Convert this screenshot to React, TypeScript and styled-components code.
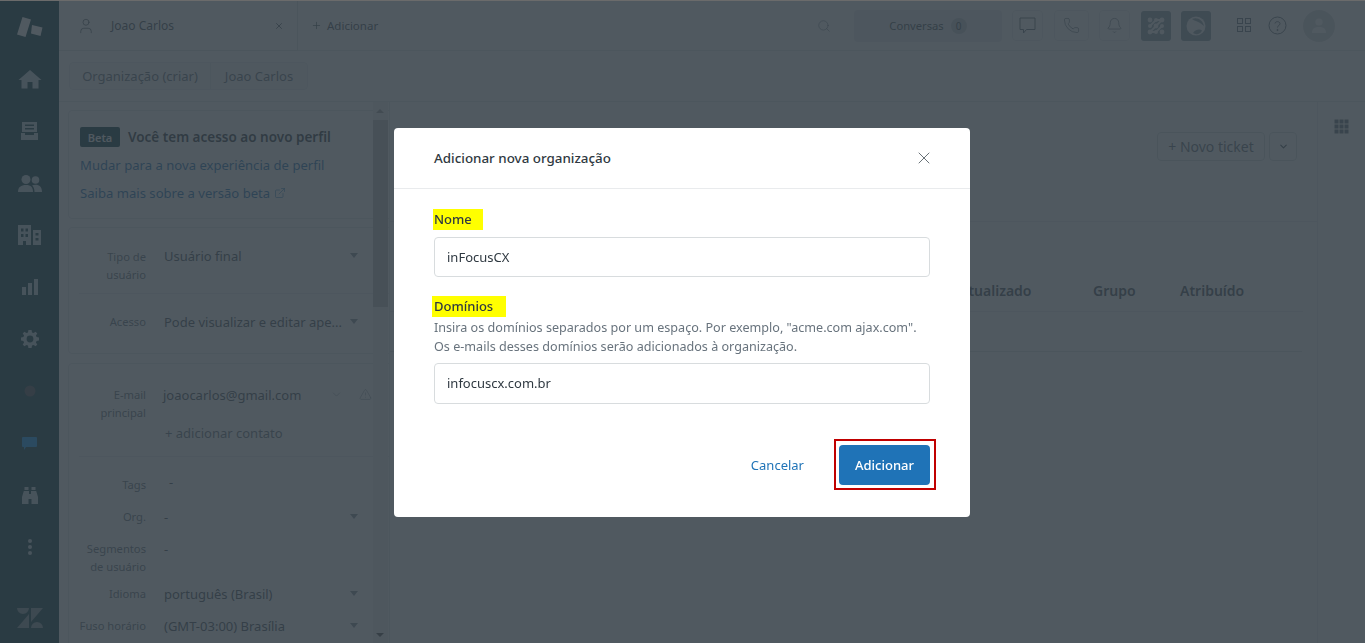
import React from "react";
import styled, { createGlobalStyle } from "styled-components";
import { User, X, Plus, Search, Phone, Bell, ChevronDown, ExternalLink, AlertTriangle } from "lucide-react";

const Global = createGlobalStyle`
  html, body { margin: 0; padding: 0; height: 100%; overflow: hidden; background: #6b6b6b; }
  #root { height: 643px; padding-top: 1px; box-sizing: border-box; }
  * { box-sizing: border-box; }
  body { font-family: "Noto Sans", "Open Sans", "Liberation Sans", sans-serif; color: #2f3941; }
`;

const Page = styled.div`display: flex; height: 642px; background: #fff; overflow: hidden;`;
const Rail = styled.nav`width: 59px; flex: none; background: #03363d; display: flex; flex-direction: column; align-items: center;`;
const RailSlot = styled.div<{ $h?: number; $bright?: boolean }>`height: ${p => p.$h ?? 52}px; flex: none; display: flex; align-items: center; justify-content: center; color: ${p => p.$bright ? "#fff" : "#c3d5dd"};`;
const Workspace = styled.div`flex: 1; min-width: 0; display: flex; flex-direction: column;`;

const TopBar = styled.header`height: 50px; flex: none; display: flex; align-items: stretch; border-bottom: 1px solid #e3e6e9; background: #fff;`;
const Tab = styled.div`width: 239px; display: flex; align-items: center; padding: 0 13px 0 18px; border-right: 1px solid #dfe2e5; border-bottom: 1px solid #dfe2e5; font-size: 12px; color: #49545c; margin-bottom: -1px;`;
const TabName = styled.span`flex: 1; margin-left: 16px;`;
const AddTab = styled.div`display: flex; align-items: center; gap: 5px; padding-left: 13px; font-size: 11.5px; color: #49545c;`;
const TopTools = styled.div`margin-left: auto; display: flex; align-items: center; padding-right: 30px; color: #68737d;`;
const ConvPill = styled.div`width: 148px; height: 32px; margin-left: 23px; border-radius: 4px; background: #e9ebed; display: flex; align-items: center; justify-content: center; gap: 7px; font-size: 11.2px; color: #49545c;`;
const CountDot = styled.span`width: 16px; height: 16px; border-radius: 50%; background: #c2c8cc; font-size: 10px; display: flex; align-items: center; justify-content: center;`;
const ToolBox = styled.div<{ $w: number; $ml: number }>`width: ${p => p.$w}px; height: 31px; margin-left: ${p => p.$ml}px; border: 1px solid #e9ebed; border-radius: 4px; display: flex; align-items: center; justify-content: center; color: #68737d;`;
const AppSquare = styled.div<{ $ml: number; $bg: string }>`width: 30px; height: 30px; margin-left: ${p => p.$ml}px; border-radius: 3px; background: ${p => p.$bg}; display: flex; align-items: center; justify-content: center;`;
const Plain = styled.div<{ $ml: number }>`margin-left: ${p => p.$ml}px; display: flex; align-items: center;`;
const Avatar = styled.div`width: 32px; height: 32px; margin-left: 16px; border-radius: 50%; background: #d8dcde; display: flex; align-items: center; justify-content: center;`;

const CrumbBar = styled.div`height: 51px; flex: none; padding: 11px 0 0 10px; border-bottom: 1px solid #e3e6e9;`;
const Crumbs = styled.div`display: inline-flex; height: 28px; border: 1px solid #e9ebed; border-radius: 4px; background: #f8f9f9;`;
const Crumb = styled.div<{ $w: number; $first?: boolean }>`width: ${p => p.$w}px; padding-bottom: 1px; display: flex; align-items: center; justify-content: center; font-size: 13px; color: #68737d; ${p => p.$first ? "border-right: 1px solid #e3e6e9;" : ""}`;

const Body = styled.div`flex: 1; min-height: 0; display: flex;`;
const LeftPanel = styled.aside`position: relative; width: 331px; flex: none; padding: 8px 0 0 9px; border-right: 1px solid #e3e6e9; overflow: hidden;`;
const Card = styled.section<{ $h: number; $mb: number }>`width: 330px; height: ${p => p.$h}px; margin-bottom: ${p => p.$mb}px; border: 1px solid #e3e6e9; border-radius: 4px;`;
const BetaBody = styled(Card)`padding: 16px 0 0 11px;`;
const BetaTitleRow = styled.div`display: flex; align-items: center; gap: 8px; height: 20px; margin-bottom: 4px;`;
const BetaBadge = styled.span`width: 40px; height: 20px; border-radius: 2px; background: #03363d; color: #fff; font-size: 11px; font-weight: 600; display: flex; align-items: center; justify-content: center;`;
const BetaTitle = styled.strong`font-size: 13.5px; font-weight: 600; white-space: nowrap;`;
const SoftLink = styled.div`display: flex; align-items: center; gap: 4px; height: 28px; font-size: 13.1px; color: #1f73b7;`;
const Row = styled.div<{ $h: number; $pt?: number; $line?: boolean }>`display: flex; height: ${p => p.$h}px; padding-top: ${p => p.$pt || 0}px; ${p => p.$line ? "border-bottom: 1px solid #e9ebed; margin-left: 10px;" : ""}`;
const Label = styled.div<{ $lead?: number }>`width: 77px; flex: none; margin-left: ${p => p.$lead || 0}px; text-align: right; font-size: 11.2px; line-height: 18px; color: #68737d;`;
const Value = styled.div<{ $ml?: number; $mt?: number }>`position: relative; flex: 1; min-width: 0; margin-left: ${p => p.$ml ?? 18}px; margin-top: ${p => p.$mt || 0}px; padding-right: 20px; font-size: 13px; line-height: 18px; color: #49545c; white-space: nowrap;`;
const Caret = styled.span`position: absolute; left: 186px; top: 6px; width: 0; height: 0; border-left: 4.5px solid transparent; border-right: 4.5px solid transparent; border-top: 5px solid #87929d;`;
const AddContact = styled.div`margin: 0 0 0 96px; font-size: 13px; line-height: 18px; color: #68737d;`;
const FieldGlyph = styled.span<{ $left: number }>`position: absolute; left: ${p => p.$left}px; top: 2px; display: flex; color: #7f8a93;`;

const Track = styled.div`position: absolute; top: 0; bottom: 0; right: 1px; width: 15px; background: #f1f1f1;`;
const Thumb = styled.div`position: absolute; left: 0; right: 0; top: 18px; height: 187px; background: #c1c1c1;`;
const Arrow = styled.span<{ $up?: boolean }>`position: absolute; left: 3px; width: 0; height: 0; border-left: 4px solid transparent; border-right: 4px solid transparent; ${p => p.$up ? "top: 7px; border-bottom: 4px solid #a3a3a3;" : "bottom: 6px; border-top: 4px solid #505050;"}`;

const Center = styled.main`flex: 1; min-width: 0; display: flex; flex-direction: column;`;
const Actions = styled.div`height: 120px; flex: none; padding: 30px 20px 0 0; display: flex; justify-content: flex-end; gap: 4px; border-bottom: 1px solid #e9ebed;`;
const GhostBtn = styled.div<{ $w: number }>`width: ${p => p.$w}px; height: 29px; border: 1px solid #d8dcde; border-radius: 4px; display: flex; align-items: center; justify-content: center; font-size: 14px; color: #68737d;`;
const TableHead = styled.div`height: 90px; flex: none; margin-right: 14px; display: flex; align-items: flex-end; padding-bottom: 11px; border-bottom: 1px solid #e9ebed; font-size: 14px; font-weight: 600; color: #49545c;`;
const HeadCell = styled.span<{ $w: number; $ml?: number }>`width: ${p => p.$w}px; margin-left: ${p => p.$ml || 0}px; flex: none;`;
const EmptyRow = styled.div`height: 40px; flex: none; margin-right: 15px; border-bottom: 1px solid #dfe2e5;`;
const RightRail = styled.aside`width: 48px; flex: none; border-left: 1px solid #e9ebed; display: flex; justify-content: center; padding: 17px 0 0 0;`;

const Overlay = styled.div`position: fixed; inset: 1px 0 0 0; padding-right: 1px; background: rgba(49, 60, 68, 0.85); display: flex; align-items: center; justify-content: center;`;
const Modal = styled.div`width: 576px; height: 389px; background: #fff; border-radius: 4px; display: flex; flex-direction: column;`;
const ModalHeader = styled.div`height: 61px; flex: none; display: flex; align-items: center; justify-content: space-between; padding: 0 36px 0 40px; border-bottom: 1px solid #e9ebed; font-size: 13.4px; font-weight: 500; color: #2f3941;`;
const ModalBody = styled.div`padding: 20px 40px 0 40px;`;
const Marked = styled.label<{ $w: number; $ml: number; $mt?: number }>`display: flex; align-items: center; width: ${p => p.$w}px; height: 21px; margin-left: ${p => p.$ml}px; margin-top: ${p => p.$mt || 0}px; padding-left: ${p => -p.$ml}px; background: #ffff00; font-size: 13px; font-weight: 500; color: #2f3941;`;
const Input = styled.div<{ $h: number; $mt?: number }>`height: ${p => p.$h}px; margin-top: ${p => p.$mt || 0}px; border: 1px solid #d8dcde; border-radius: 4px; padding: 0 12px; display: flex; align-items: center; font-size: 13px; color: #2f3941;`;
const Hint = styled.p`margin: 1px 0 7px 0; font-size: 12.6px; line-height: 19px; color: #68737d; white-space: nowrap;`;
const ModalFooter = styled.div`margin-top: 35px; padding-right: 34px; display: flex; align-items: center; justify-content: flex-end;`;
const Cancel = styled.span`margin-right: 30px; padding-top: 1px; font-size: 13px; color: #1f73b7;`;
const RedFrame = styled.div`padding: 4px 4px 3px 3px; border: 2px solid #c00000; display: flex;`;
const Primary = styled.div`width: 91px; height: 40px; border-radius: 4px; background: #1f73b7; color: #fff; font-size: 13px; font-weight: 500; display: flex; align-items: center; justify-content: center;`;

const Logo = () => (
  <svg width="26" height="20" viewBox="0 0 26 20" fill="currentColor"><path d="M5.5 0 L14 2.5 L8.5 20 L0 17.5 Z"/><path d="M15 9 L25.5 11.5 L23.5 20 L14 17.5 Z" transform="translate(0 -1)"/></svg>
);
const Home = () => (
  <svg width="24" height="20" viewBox="0 0 24 20" fill="currentColor"><path d="M12 1 L23.5 11 H20.5 V19.5 H14.5 V13 H9.5 V19.5 H3.5 V11 H0.5 Z"/></svg>
);
const Views = () => (
  <svg width="17" height="18" viewBox="0 0 17 18" fill="currentColor"><path d="M1 0 H16 V10 H1 Z M4 2.5 V4 H13 V2.5 Z M4 6 V7.5 H13 V6 Z" fillRule="evenodd"/><path d="M0 11 H4 V13 H13 V11 H17 V18 H0 Z"/></svg>
);
const Users = () => (
  <svg width="24" height="17" viewBox="0 0 24 17" fill="currentColor"><circle cx="8" cy="4.5" r="4.5"/><circle cx="17.5" cy="5" r="3.8"/><path d="M0 17 C0 12 3 10 8 10 C13 10 15 12.5 15 17 Z"/><path d="M16.5 17 C16.5 13.5 15.5 11.5 14 10.4 C15 10 16 9.8 17.5 9.8 C21.5 9.8 24 12 24 17 Z"/></svg>
);
const Orgs = () => (
  <svg width="23" height="20" viewBox="0 0 23 20" fill="currentColor"><path fillRule="evenodd" d="M0 0 H13 V20 H8 V16 H5 V20 H0 Z M3 3.5 V6.5 H5.5 V3.5 Z M7.5 3.5 V6.5 H10 V3.5 Z M3 9 V12 H5.5 V9 Z M7.5 9 V12 H10 V9 Z"/><path fillRule="evenodd" d="M15 5 H23 V20 H15 Z M17.5 8 V10.5 H20.5 V8 Z M17.5 13 V15.5 H20.5 V13 Z"/></svg>
);
const Bars = () => (
  <svg width="16" height="16" viewBox="0 0 16 16" fill="currentColor"><rect x="0" y="8" width="4" height="8"/><rect x="6" y="4" width="4" height="12"/><rect x="12" y="0" width="4" height="16"/></svg>
);
const Gear = () => (
  <svg width="18" height="18" viewBox="0 0 18 18" fill="currentColor"><path fillRule="evenodd" d="M7.4 0 H10.6 L11 2.4 L12.6 3.1 L14.6 1.7 L16.3 3.4 L14.9 5.4 L15.6 7 L18 7.4 V10.6 L15.6 11 L14.9 12.6 L16.3 14.6 L14.6 16.3 L12.6 14.9 L11 15.6 L10.6 18 H7.4 L7 15.6 L5.4 14.9 L3.4 16.3 L1.7 14.6 L3.1 12.6 L2.4 11 L0 10.6 V7.4 L2.4 7 L3.1 5.4 L1.7 3.4 L3.4 1.7 L5.4 3.1 L7 2.4 Z M9 5.6 A3.4 3.4 0 1 0 9 12.4 A3.4 3.4 0 1 0 9 5.6 Z"/></svg>
);
const ChatBlue = () => (
  <svg width="15" height="13" viewBox="0 0 15 13" fill="#0a99ff"><path d="M1 0 H14 A1 1 0 0 1 15 1 V9 A1 1 0 0 1 14 10 H4 L2 13 V10 H1 A1 1 0 0 1 0 9 V1 A1 1 0 0 1 1 0 Z"/></svg>
);
const Binoculars = () => (
  <svg width="16" height="17" viewBox="0 0 16 17" fill="currentColor"><path d="M2.5 0 H6.5 V3 H2.5 Z M9.5 0 H13.5 V3 H9.5 Z M1.8 4 H7 V7 H9 V4 H14.2 L16 10 V17 H9.5 V12 H6.5 V17 H0 V10 Z"/></svg>
);
const Dots = () => (
  <svg width="4" height="16" viewBox="0 0 4 16" fill="currentColor"><circle cx="2" cy="2" r="2"/><circle cx="2" cy="8" r="2"/><circle cx="2" cy="14" r="2"/></svg>
);
const Zen = () => (
  <svg width="26" height="20" viewBox="0 0 26 20" fill="#7d9297"><path d="M12 6 V20 H0 Z M12 0 A6 6 0 0 1 0 0 Z M14 20 A6 6 0 0 1 26 20 Z M14 14 V0 H26 Z"/></svg>
);
const Squares = ({ size, gap, cols, color, fill }: { size: number; gap: number; cols: number; color: string; fill?: boolean }) => {
  const step = size + gap;
  const total = step * cols - gap;
  const cells: React.ReactNode[] = [];
  for (let r = 0; r < cols; r++) for (let c = 0; c < cols; c++) cells.push(
    <rect key={`${r}${c}`} x={c * step + 0.5} y={r * step + 0.5} width={size - (fill ? 0 : 1)} height={size - (fill ? 0 : 1)} fill={fill ? color : "none"} stroke={fill ? "none" : color} />
  );
  return <svg width={total + 1} height={total + 1} viewBox={`0 0 ${total + 1} ${total + 1}`}>{cells}</svg>;
};
const ChatOutline = () => (
  <svg width="17" height="17" viewBox="0 0 17 17" fill="none" stroke="#68737d"><path d="M1 1 H16 V12.5 H7.5 L4.5 16 V12.5 H1 Z"/></svg>
);
const Wave = () => (
  <svg width="18" height="18" viewBox="0 0 18 18" fill="#f3f5f6"><circle cx="3" cy="3" r="2.4"/><circle cx="9" cy="3" r="2"/><circle cx="15" cy="3" r="2.4"/><circle cx="3" cy="9" r="2"/><circle cx="9" cy="9" r="2.4"/><circle cx="15" cy="9" r="2"/><circle cx="3" cy="15" r="2.4"/><circle cx="9" cy="15" r="2"/><circle cx="15" cy="15" r="2.4"/><path d="M3 9 L9 3 L15 3 L9 9 L3 15 L9 15 L15 9" stroke="#f3f5f6" strokeWidth="2" fill="none"/></svg>
);
const Globe = () => (
  <svg width="20" height="20" viewBox="0 0 20 20"><circle cx="10" cy="10" r="9.5" fill="#f3f5f6"/><path d="M6 3 C11 0.5 17 4 18 10 C14 6 9 5 6 3 Z" fill="#8b9fa8"/><path d="M7 17 C10 13 14 13 16 14.5 C14 18.5 10 19 7 17 Z" fill="#8b9fa8"/></svg>
);
const Person = () => (
  <svg width="14" height="15" viewBox="0 0 14 15" fill="#fff"><circle cx="7" cy="4" r="3.6"/><path d="M0 15 C0 10.5 3 9 7 9 C11 9 14 10.5 14 15 Z"/></svg>
);
const Help = () => (
  <svg width="19" height="19" viewBox="0 0 19 19" fill="none" stroke="#68737d"><circle cx="9.5" cy="9.5" r="8.5"/><path d="M7 7.5 C7 5 12 5 12 7.7 C12 9.5 9.5 9.5 9.5 11.5"/><circle cx="9.5" cy="14" r=".6" fill="#68737d"/></svg>
);

export default function App() {
  return (
    <>
      <Global />
      <Page>
        <Rail>
          <RailSlot $bright><Logo /></RailSlot>
          <RailSlot><Home /></RailSlot>
          <RailSlot><Views /></RailSlot>
          <RailSlot><Users /></RailSlot>
          <RailSlot><Orgs /></RailSlot>
          <RailSlot><Bars /></RailSlot>
          <RailSlot><Gear /></RailSlot>
          <RailSlot><svg width="12" height="12"><circle cx="6" cy="6" r="5.5" fill="#4a4a50" /></svg></RailSlot>
          <RailSlot><ChatBlue /></RailSlot>
          <RailSlot><Binoculars /></RailSlot>
          <RailSlot><Dots /></RailSlot>
          <RailSlot $h={90}><Zen /></RailSlot>
        </Rail>
        <Workspace>
          <TopBar>
            <Tab>
              <User size={18} strokeWidth={1} />
              <TabName>Joao Carlos</TabName>
              <X size={10} strokeWidth={2} />
            </Tab>
            <AddTab><Plus size={11} strokeWidth={1.5} />Adicionar</AddTab>
            <TopTools>
              <Search size={14} strokeWidth={1} />
              <ConvPill>Conversas<CountDot>0</CountDot></ConvPill>
              <ToolBox $w={31} $ml={10}><ChatOutline /></ToolBox>
              <ToolBox $w={35} $ml={11}><Phone size={17} strokeWidth={1} /></ToolBox>
              <ToolBox $w={31} $ml={10}><Bell size={17} strokeWidth={1} /></ToolBox>
              <AppSquare $ml={11} $bg="#8b9fa8"><Wave /></AppSquare>
              <AppSquare $ml={10} $bg="#8b9fa8"><Globe /></AppSquare>
              <Plain $ml={26}><Squares size={6} gap={2} cols={2} color="#68737d" /></Plain>
              <Plain $ml={16}><Help /></Plain>
              <Avatar><Person /></Avatar>
            </TopTools>
          </TopBar>
          <CrumbBar>
            <Crumbs>
              <Crumb $w={141} $first>Organização (criar)</Crumb>
              <Crumb $w={96}>Joao Carlos</Crumb>
            </Crumbs>
          </CrumbBar>
          <Body>
            <LeftPanel>
              <BetaBody $h={109} $mb={8}>
                <BetaTitleRow><BetaBadge>Beta</BetaBadge><BetaTitle>Você tem acesso ao novo perfil</BetaTitle></BetaTitleRow>
                <SoftLink>Mudar para a nova experiência de perfil</SoftLink>
                <SoftLink>Saiba mais sobre a versão beta <ExternalLink size={12} strokeWidth={1.2} /></SoftLink>
              </BetaBody>
              <Card $h={127} $mb={9}>
                <Row $h={66} $pt={20} $line>
                  <Label $lead={-10}>Tipo de<br />usuário</Label>
                  <Value $mt={-1}>Usuário final<Caret /></Value>
                </Row>
                <Row $h={50} $pt={19}>
                  <Label>Acesso</Label>
                  <Value>Pode visualizar e editar ape...<Caret /></Value>
                </Row>
              </Card>
              <Card $h={300} $mb={0}>
                <Row $h={60} $pt={22}>
                  <Label>E-mail<br />principal</Label>
                  <Value $ml={17}>joaocarlos@gmail.com
                    <FieldGlyph $left={167}><ChevronDown size={13} strokeWidth={1} /></FieldGlyph>
                    <FieldGlyph $left={196}><AlertTriangle size={13} strokeWidth={1} /></FieldGlyph>
                  </Value>
                </Row>
                <AddContact>+ adicionar contato</AddContact>
                <Row $h={15} $line />
                <Row $h={38} $pt={19}>
                  <Label>Tags</Label>
                  <Value $ml={23} $mt={-3}>-</Value>
                </Row>
                <Row $h={32} $pt={13}>
                  <Label>Org.</Label>
                  <Value>-<Caret /></Value>
                </Row>
                <Row $h={45} $pt={13}>
                  <Label>Segmentos<br />de usuário</Label>
                  <Value>-</Value>
                </Row>
                <Row $h={32} $pt={13}>
                  <Label>Idioma</Label>
                  <Value>português (Brasil)<Caret /></Value>
                </Row>
                <Row $h={32} $pt={13}>
                  <Label>Fuso horário</Label>
                  <Value>(GMT-03:00) Brasília<Caret /></Value>
                </Row>
              </Card>
              <Track><Thumb /><Arrow $up /><Arrow /></Track>
            </LeftPanel>
            <Center>
              <Actions>
                <GhostBtn $w={108}>+ Novo ticket</GhostBtn>
                <GhostBtn $w={28}><ChevronDown size={11} strokeWidth={2.5} color="#49545c" /></GhostBtn>
              </Actions>
              <TableHead>
                <HeadCell $w={134} $ml={569}>Atualizado</HeadCell>
                <HeadCell $w={87}>Grupo</HeadCell>
                <HeadCell $w={70}>Atribuído</HeadCell>
              </TableHead>
              <EmptyRow />
            </Center>
            <RightRail><Squares size={4} gap={1} cols={3} color="#68737d" fill /></RightRail>
          </Body>
        </Workspace>
      </Page>
      <Overlay>
        <Modal>
          <ModalHeader>Adicionar nova organização<X size={20} strokeWidth={1} color="#49545c" /></ModalHeader>
          <ModalBody>
            <Marked $w={50} $ml={-1}>Nome</Marked>
            <Input $h={40} $mt={7}>inFocusCX</Input>
            <Marked $w={74} $ml={-2} $mt={19}>Domínios</Marked>
            <Hint>Insira os domínios separados por um espaço. Por exemplo, "acme.com ajax.com".<br />Os e-mails desses domínios serão adicionados à organização.</Hint>
            <Input $h={41}>infocuscx.com.br</Input>
          </ModalBody>
          <ModalFooter>
            <Cancel>Cancelar</Cancel>
            <RedFrame><Primary>Adicionar</Primary></RedFrame>
          </ModalFooter>
        </Modal>
      </Overlay>
    </>
  );
}
